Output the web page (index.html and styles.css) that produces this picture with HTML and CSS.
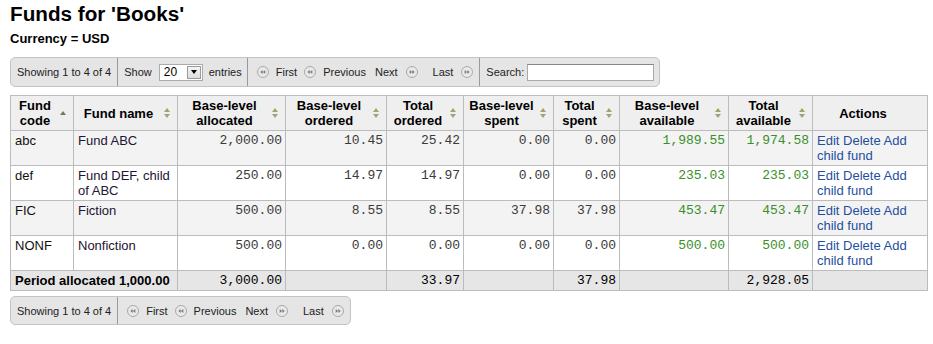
FILE: index.html
```html
<!DOCTYPE html>
<html lang="en">
<head>
<meta charset="utf-8">
<title>Funds for 'Books'</title>
<link rel="stylesheet" href="styles.css">
</head>
<body>
<div class="page">
  <h1 class="title">Funds for 'Books'</h1>
  <p class="currency">Currency = USD</p>

  <div class="toolbar">
    <div class="seg seg-info">Showing 1 to 4 of 4</div>
    <div class="seg seg-length">
      <span>Show</span>
      <span class="fake-select"><span class="fake-select-val">20</span><span class="fake-select-btn"><span class="tri-down"></span></span></span>
      <span>entries</span>
    </div>
    <div class="seg seg-pager">
      <span class="pg pg-first"><svg class="pgicon" viewBox="0 0 12 12" width="12" height="12"><circle cx="6" cy="6" r="5.5" fill="#e9e9e9" stroke="#a9a9a9"/><polygon points="3.3,6 5.7,4 5.7,8" fill="#7a7a7a"/><polygon points="5.9,6 8.3,4 8.3,8" fill="#7a7a7a"/></svg>First</span>
      <span class="pg pg-prev"><svg class="pgicon" viewBox="0 0 12 12" width="12" height="12"><circle cx="6" cy="6" r="5.5" fill="#e9e9e9" stroke="#a9a9a9"/><polygon points="3.3,6 5.7,4 5.7,8" fill="#7a7a7a"/><polygon points="5.9,6 8.3,4 8.3,8" fill="#7a7a7a"/></svg>Previous</span>
      <span class="pg pg-next">Next<svg class="pgicon" viewBox="0 0 12 12" width="12" height="12"><circle cx="6" cy="6" r="5.5" fill="#e9e9e9" stroke="#a9a9a9"/><polygon points="8.7,6 6.3,4 6.3,8" fill="#7a7a7a"/><polygon points="6.1,6 3.7,4 3.7,8" fill="#7a7a7a"/></svg></span>
      <span class="pg pg-last">Last<svg class="pgicon" viewBox="0 0 12 12" width="12" height="12"><circle cx="6" cy="6" r="5.5" fill="#e9e9e9" stroke="#a9a9a9"/><polygon points="8.7,6 6.3,4 6.3,8" fill="#7a7a7a"/><polygon points="6.1,6 3.7,4 3.7,8" fill="#7a7a7a"/></svg></span>
    </div>
    <div class="seg seg-search">
      <span>Search:</span>
      <input class="search-input" type="text">
    </div>
  </div>

  <table class="funds">
    <colgroup>
      <col style="width:63px"><col style="width:104px"><col style="width:108px"><col style="width:101px"><col style="width:77px"><col style="width:90px"><col style="width:66px"><col style="width:109px"><col style="width:84px"><col style="width:115px">
    </colgroup>
    <thead>
      <tr>
        <th><div class="th-in"><span class="th-label">Fund code</span><span class="sort sort-asc"></span></div></th>
        <th><div class="th-in"><span class="th-label">Fund name</span><span class="sort sort-both"></span></div></th>
        <th><div class="th-in"><span class="th-label">Base-level allocated</span><span class="sort sort-both"></span></div></th>
        <th><div class="th-in"><span class="th-label">Base-level ordered</span><span class="sort sort-both"></span></div></th>
        <th><div class="th-in"><span class="th-label">Total ordered</span><span class="sort sort-both"></span></div></th>
        <th><div class="th-in"><span class="th-label">Base-level spent</span><span class="sort sort-both"></span></div></th>
        <th><div class="th-in"><span class="th-label">Total spent</span><span class="sort sort-both"></span></div></th>
        <th><div class="th-in"><span class="th-label">Base-level available</span><span class="sort sort-both"></span></div></th>
        <th><div class="th-in"><span class="th-label">Total available</span><span class="sort sort-both"></span></div></th>
        <th><div class="th-in"><span class="th-label">Actions</span><span class="sort sort-none"></span></div></th>
      </tr>
    </thead>
    <tbody>
      <tr class="odd">
        <td>abc</td>
        <td class="fname">Fund ABC</td>
        <td class="num">2,000.00</td>
        <td class="num">10.45</td>
        <td class="num">25.42</td>
        <td class="num">0.00</td>
        <td class="num">0.00</td>
        <td class="num pos">1,989.55</td>
        <td class="num pos">1,974.58</td>
        <td class="actions"><a href="#">Edit</a> <a href="#">Delete</a> <a href="#">Add child fund</a></td>
      </tr>
      <tr>
        <td>def</td>
        <td class="fname">Fund DEF, child of ABC</td>
        <td class="num">250.00</td>
        <td class="num">14.97</td>
        <td class="num">14.97</td>
        <td class="num">0.00</td>
        <td class="num">0.00</td>
        <td class="num pos">235.03</td>
        <td class="num pos">235.03</td>
        <td class="actions"><a href="#">Edit</a> <a href="#">Delete</a> <a href="#">Add child fund</a></td>
      </tr>
      <tr class="odd">
        <td>FIC</td>
        <td class="fname">Fiction</td>
        <td class="num">500.00</td>
        <td class="num">8.55</td>
        <td class="num">8.55</td>
        <td class="num">37.98</td>
        <td class="num">37.98</td>
        <td class="num pos">453.47</td>
        <td class="num pos">453.47</td>
        <td class="actions"><a href="#">Edit</a> <a href="#">Delete</a> <a href="#">Add child fund</a></td>
      </tr>
      <tr>
        <td>NONF</td>
        <td class="fname">Nonfiction</td>
        <td class="num">500.00</td>
        <td class="num">0.00</td>
        <td class="num">0.00</td>
        <td class="num">0.00</td>
        <td class="num">0.00</td>
        <td class="num pos">500.00</td>
        <td class="num pos">500.00</td>
        <td class="actions"><a href="#">Edit</a> <a href="#">Delete</a> <a href="#">Add child fund</a></td>
      </tr>
    </tbody>
    <tfoot>
      <tr>
        <th class="foot-label" colspan="2">Period allocated 1,000.00</th>
        <td class="num">3,000.00</td>
        <td></td>
        <td class="num">33.97</td>
        <td></td>
        <td class="num">37.98</td>
        <td></td>
        <td class="num">2,928.05</td>
        <td></td>
      </tr>
    </tfoot>
  </table>

  <div class="toolbar toolbar-bottom">
    <div class="seg seg-info">Showing 1 to 4 of 4</div>
    <div class="seg seg-pager">
      <span class="pg pg-first"><svg class="pgicon" viewBox="0 0 12 12" width="12" height="12"><circle cx="6" cy="6" r="5.5" fill="#e9e9e9" stroke="#a9a9a9"/><polygon points="3.3,6 5.7,4 5.7,8" fill="#7a7a7a"/><polygon points="5.9,6 8.3,4 8.3,8" fill="#7a7a7a"/></svg>First</span>
      <span class="pg pg-prev"><svg class="pgicon" viewBox="0 0 12 12" width="12" height="12"><circle cx="6" cy="6" r="5.5" fill="#e9e9e9" stroke="#a9a9a9"/><polygon points="3.3,6 5.7,4 5.7,8" fill="#7a7a7a"/><polygon points="5.9,6 8.3,4 8.3,8" fill="#7a7a7a"/></svg>Previous</span>
      <span class="pg pg-next">Next<svg class="pgicon" viewBox="0 0 12 12" width="12" height="12"><circle cx="6" cy="6" r="5.5" fill="#e9e9e9" stroke="#a9a9a9"/><polygon points="8.7,6 6.3,4 6.3,8" fill="#7a7a7a"/><polygon points="6.1,6 3.7,4 3.7,8" fill="#7a7a7a"/></svg></span>
      <span class="pg pg-last">Last<svg class="pgicon" viewBox="0 0 12 12" width="12" height="12"><circle cx="6" cy="6" r="5.5" fill="#e9e9e9" stroke="#a9a9a9"/><polygon points="8.7,6 6.3,4 6.3,8" fill="#7a7a7a"/><polygon points="6.1,6 3.7,4 3.7,8" fill="#7a7a7a"/></svg></span>
    </div>
  </div>
</div>
</body>
</html>
```
FILE: styles.css
```css
* { box-sizing: border-box; }

body {
  margin: 0;
  background: #fff;
  color: #000;
  font-family: "Liberation Sans", Arial, sans-serif;
}

.page {
  padding: 2px 10px 0 10px;
}

.title {
  margin: 0;
  font-size: 20.7px;
  line-height: 24px;
  font-weight: bold;
  color: #000;
}

.currency {
  margin: 5px 0 0 0;
  font-size: 13px;
  line-height: 15px;
  font-weight: bold;
}

/* toolbar */
.toolbar {
  margin-top: 11px;
  display: inline-flex;
  align-items: stretch;
  height: 30px;
  background: #e5e5e5;
  border: 1px solid #c4c4c4;
  border-radius: 5px;
  font-size: 11px;
  color: #222;
}

.toolbar-bottom {
  display: flex;
  width: max-content;
  margin-top: 5px;
  height: 29px;
}

.seg {
  display: flex;
  align-items: center;
  white-space: nowrap;
}

.seg + .seg {
  border-left: 1px solid #9a9a9a;
}

.seg-info {
  padding: 0 6px 0 6px;
}

.seg-length {
  padding: 0 5px 0 6px;
}

.fake-select {
  display: inline-flex;
  align-items: center;
  width: 44px;
  height: 17px;
  margin: 0 6px 0 7px;
  background: #fff;
  border: 1px solid #a5acb2;
  font-size: 12px;
}

.fake-select-val {
  flex: 1;
  padding-left: 4px;
  color: #000;
}

.fake-select-btn {
  display: flex;
  align-items: center;
  justify-content: center;
  width: 14px;
  height: 13px;
  margin-right: 1px;
  background: linear-gradient(#f4f4f4, #dcdcdc);
  border: 1px solid #9a9a9a;
}

.tri-down {
  width: 0;
  height: 0;
  border-left: 3.5px solid transparent;
  border-right: 3.5px solid transparent;
  border-top: 4px solid #000;
}

.seg-pager {
  padding: 0 6px 0 9px;
}

.pg {
  display: inline-flex;
  align-items: center;
}

.pgicon {
  display: block;
  flex: none;
}

.pg-first .pgicon, .pg-prev .pgicon { margin-right: 7px; }
.pg-next .pgicon, .pg-last .pgicon { margin-left: 8px; }
.pg-prev { margin-left: 7px; }
.pg-next { margin-left: 9px; }
.pg-last { margin-left: 15px; }

.seg-search {
  padding: 0 5px 0 6px;
}

.search-input {
  width: 127px;
  height: 17px;
  margin: 0 0 0 3px;
  padding: 0;
  background: #fff;
  border: 1px solid #a9a9a9;
  border-top-color: #868686;
  font-size: 11px;
}

/* table */
.funds {
  margin-top: 8px;
  width: 918px;
  table-layout: fixed;
  border-collapse: collapse;
  font-size: 13px;
  line-height: 15px;
}

.funds th,
.funds td {
  border: 1px solid #bcbcbc;
  padding: 2px 4px;
}

.funds thead th {
  background: #efefef;
  vertical-align: middle;
  font-weight: bold;
  padding-right: 7px;
}

.th-in {
  display: flex;
  align-items: center;
}

.th-label {
  flex: 1;
  text-align: center;
}

.sort {
  flex: none;
  width: 7px;
  margin-left: 4px;
  display: flex;
  flex-direction: column;
  align-items: center;
}

.sort-both::before {
  content: "";
  width: 0;
  height: 0;
  border-left: 3.5px solid transparent;
  border-right: 3.5px solid transparent;
  border-bottom: 4px solid #a3a36c;
  margin-bottom: 2px;
}

.sort-both::after {
  content: "";
  width: 0;
  height: 0;
  border-left: 3.5px solid transparent;
  border-right: 3.5px solid transparent;
  border-top: 4px solid #a3a36c;
}

.sort-asc::before {
  content: "";
  width: 0;
  height: 0;
  border-left: 3.5px solid transparent;
  border-right: 3.5px solid transparent;
  border-bottom: 4px solid #77775a;
}

.funds tbody td {
  vertical-align: top;
  background: #fff;
  color: #111;
}

.funds tbody tr.odd td {
  background: #f3f3f3;
}

.funds td.fname {
  color: #1e1433;
}

.funds td.num {
  text-align: right;
  padding-right: 3px;
  font-family: "Liberation Mono", "Courier New", monospace;
  font-size: 13px;
  color: #3a3a3a;
}

.funds td.pos {
  color: #3a8f2a;
}

.funds td.actions a {
  color: #1f4f9e;
  text-decoration: none;
}

.funds tfoot th,
.funds tfoot td {
  background: #e6e6e6;
  vertical-align: top;
}

.funds tfoot .foot-label {
  text-align: left;
  font-weight: bold;
}

.funds tfoot td.num {
  color: #000;
}
```
